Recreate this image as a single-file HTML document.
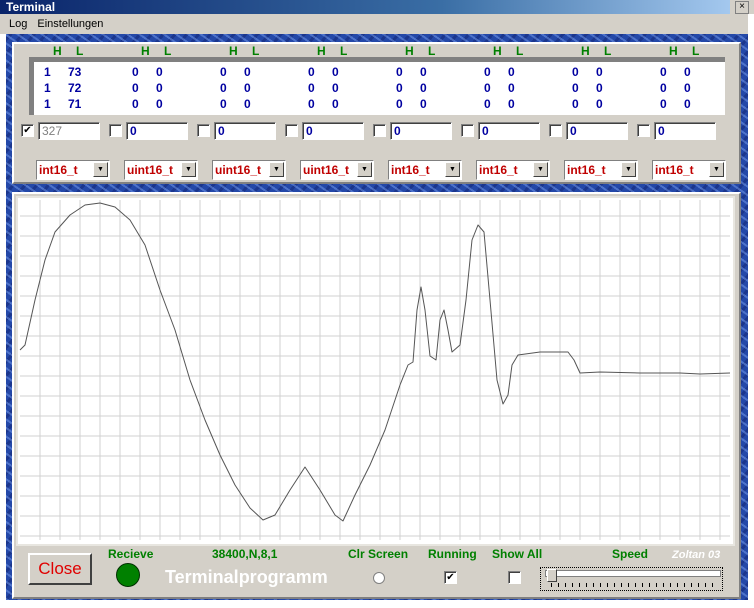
<!DOCTYPE html><html><head><style>
body{margin:0;width:754px;height:608px;position:relative;overflow:hidden;background:#fff;font-family:"Liberation Sans",sans-serif}
.a{position:absolute}
.title{left:0;top:0;width:730px;height:14px;background:linear-gradient(90deg,#0a246a,#3a6ea5 60%,#a6caf0);color:#fff;font-weight:bold;font-size:12px;line-height:14px;padding-left:6px}
.menu{left:0;top:14px;width:748px;height:20px;background:#d4d0c8;font-size:11px;line-height:20px}
.blue{left:6px;top:34px;width:742px;height:566px;background:#2448a8;background-image:repeating-linear-gradient(35deg,rgba(140,180,255,.4) 0 2px,transparent 2px 7px),repeating-linear-gradient(-50deg,rgba(10,20,90,.35) 0 3px,transparent 3px 9px)}
.panel{background:#d4d0c8;border-top:2px solid #fff;border-left:2px solid #fff;border-right:2px solid #808080;border-bottom:2px solid #808080;box-sizing:border-box}
.g{color:#008000;font-weight:bold;font-size:12px}
.n{color:#0000a0;font-weight:bold;font-size:12px}
.cb{width:11px;height:11px;background:#fff;border:1px solid #808080;border-right-color:#fff;border-bottom-color:#fff;box-shadow:inset 1px 1px #404040;font-size:10px;line-height:11px;text-align:center}
.tb{width:62px;height:18px;background:#fff;border:1px solid #808080;border-right-color:#fff;border-bottom-color:#fff;box-shadow:inset 1px 1px #404040;box-sizing:border-box;font-size:12px;color:#0000a0;font-weight:bold;padding-left:3px;line-height:16px}
.sel{width:74px;height:20px;background:#fff;border:1px solid #808080;border-right-color:#fff;border-bottom-color:#fff;box-sizing:border-box;color:#c00000;font-weight:bold;font-size:12px;line-height:18px;padding-left:2px}
.sel b{position:absolute;right:1px;top:1px;width:15px;height:15px;background:#d4d0c8;border:1px solid;border-color:#fff #404040 #404040 #fff;box-sizing:border-box;font-size:7px;line-height:13px;text-align:center;color:#000}
</style></head><body>
<div class="a title">Terminal</div>
<div class="a" style="left:730px;top:0;width:24px;height:14px;background:#d4d0c8"></div>
<div class="a" style="left:735px;top:1px;width:12px;height:11px;border:1px solid #808080;background:#d4d0c8;font-size:10px;line-height:10px;text-align:center">×</div>
<div class="a menu"><span style="margin-left:9px">Log</span><span style="margin-left:10px">Einstellungen</span></div>
<div class="a blue"></div>
<div class="a panel" style="left:12px;top:42px;width:729px;height:142px"></div>
<div class="a" style="left:29px;top:57px;width:696px;height:58px;background:#fff;border-top:5px solid #808080;border-left:5px solid #808080;box-sizing:border-box"></div>
<div id="cols"></div>
<div class="a panel" style="left:12px;top:192px;width:729px;height:407px"></div>
<div class="a" style="left:18px;top:198px;width:713px;height:344px;background:#fff;border:1px solid #fff;box-shadow:0 0 0 2px #e8e6e0"></div>
<svg class="a" style="left:0;top:0" width="754" height="608">
<g stroke="#d0d0d0" stroke-width="1" id="grid"></g>
<polyline fill="none" stroke="#555" stroke-width="1" stroke-linejoin="round" points="20,350 25,345 35,300 45,260 55,232 70,215 85,205 100,203 115,207 130,220 145,245 160,290 175,330 190,380 205,420 220,455 235,485 250,508 263,520 275,515 290,490 305,467 320,490 335,515 343,521 355,495 370,465 385,430 400,385 408,365 413,362 417,310 421,287 425,310 430,356 436,360 440,320 444,310 448,330 452,352 460,345 466,300 472,240 478,225 484,232 490,300 497,380 503,404 508,395 512,365 518,355 540,352 568,352 574,360 580,373 600,372 640,373 680,373 700,374 730,373"/>
</svg>
<div class="a" style="left:28px;top:553px;width:64px;height:32px;background:#d4d0c8;border:2px solid;border-color:#fff #404040 #404040 #fff;box-sizing:border-box;color:#e00000;font-size:17px;text-align:center;line-height:27px">Close</div>
<div class="a g" style="left:108px;top:547px">Recieve</div>
<div class="a" style="left:116px;top:563px;width:24px;height:24px;border-radius:50%;background:#008000;border:1px solid #003000;box-sizing:border-box"></div>
<div class="a g" style="left:212px;top:547px">38400,N,8,1</div>
<div class="a" style="left:165px;top:567px;color:#fff;font-weight:bold;font-size:18px">Terminalprogramm</div>
<div class="a g" style="left:348px;top:547px">Clr Screen</div>
<div class="a" style="left:373px;top:572px;width:10px;height:10px;border-radius:50%;background:#fff;border:1px solid #808080"></div>
<div class="a g" style="left:428px;top:547px">Running</div>
<div class="a cb" style="left:444px;top:571px">✔</div>
<div class="a g" style="left:492px;top:547px">Show All</div>
<div class="a cb" style="left:508px;top:571px"></div>
<div class="a g" style="left:612px;top:547px">Speed</div>
<div class="a" style="left:672px;top:549px;color:#fff;font-style:italic;font-weight:bold;font-size:11px">Zoltan 03</div>
<div class="a" style="left:540px;top:567px;width:183px;height:24px;border:1px dotted #000;box-sizing:border-box"></div>
<div class="a" style="left:545px;top:570px;width:174px;height:5px;background:#fff;border:1px solid #808080"></div>
<div class="a" style="left:547px;top:569px;width:8px;height:11px;background:#d4d0c8;border:1px solid;border-color:#fff #404040 #404040 #fff"></div>
<div class="a" style="left:551px;top:583px;width:168px;height:4px;background:repeating-linear-gradient(90deg,#000 0 1px,transparent 1px 7px)"></div>
<script>
var c='';var s=document.getElementById('cols');
for(var i=0;i<8;i++){var x=i*88;
c+='<div class="a g" style="left:'+(53+x)+'px;top:44px">H</div><div class="a g" style="left:'+(76+x)+'px;top:44px">L</div>';
var v=i==0?[['1','73'],['1','72'],['1','71']]:[['0','0'],['0','0'],['0','0']];
for(var r=0;r<3;r++){c+='<div class="a n" style="left:'+(44+x)+'px;top:'+(65+r*16)+'px">'+v[r][0]+'</div><div class="a n" style="left:'+(68+x)+'px;top:'+(65+r*16)+'px">'+v[r][1]+'</div>';}
c+='<div class="a cb" style="left:'+(21+x)+'px;top:124px">'+(i==0?'✔':'')+'</div>';
c+='<div class="a tb" style="left:'+(38+x)+'px;top:122px;'+(i==0?'color:#808080;font-weight:normal':'')+'">'+(i==0?'327':'0')+'</div>';
var t=['int16_t','uint16_t','uint16_t','uint16_t','int16_t','int16_t','int16_t','int16_t'][i];
c+='<div class="a sel" style="left:'+(36+x)+'px;top:160px">'+t+'<b>▼</b></div>';}
s.outerHTML=c;
var g='';for(var x=40;x<730;x+=20)g+='<line x1="'+x+'" y1="200" x2="'+x+'" y2="540"/>';
for(var y=216;y<540;y+=20)g+='<line x1="20" y1="'+y+'" x2="730" y2="'+y+'"/>';
document.getElementById('grid').innerHTML=g;
</script>
</body></html>
